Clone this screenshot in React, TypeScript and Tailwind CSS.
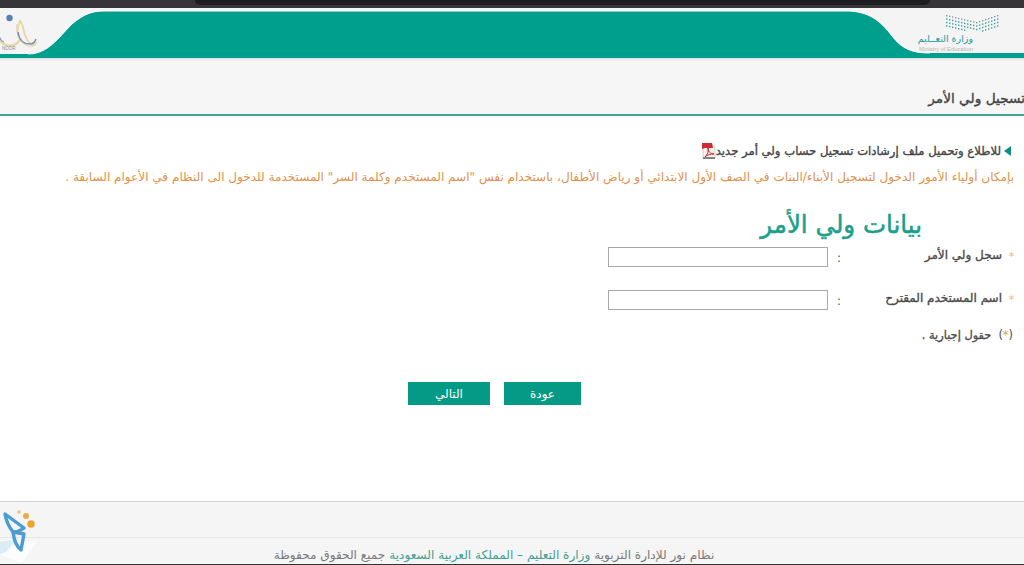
const arabic = 'font-["DejaVu_Sans",sans-serif]';

const NoorLogo = () => (
  <svg className="absolute left-0 top-[2px] h-[46px] w-[42px]" viewBox="0 0 42 46" fill="none">
    <circle cx="9.5" cy="8" r="3.2" fill="#5b7fb5" />
    <path d="M-3 18c0 9 3 15 9 17 5 2 11 0 14-5" stroke="#e6d6a4" strokeWidth="2.4" />
    <path d="M20 30c-3-6-3-13 0-19 3 2 3 8 5 14 2 6 6 10 10 10" stroke="#e6d6a4" strokeWidth="1.8" />
    <path d="M17 14c-1 8 2 19 11 22 4 1 8-1 9-4" stroke="#e6d6a4" strokeWidth="1.2" />
    <path d="M18 22c1 8 6 12 12 12 3 0 5-2 6-5" stroke="#7a8fb5" strokeWidth="1.5" />
    <path d="M-2 22c1 6 3 9 6 10" stroke="#8a9dc0" strokeWidth="1.3" />
    <text x="2" y="40" direction="ltr" fontSize="4.5" fill="#7d8aa5" fontFamily="Liberation Sans">
      NOOR
    </text>
  </svg>
);

const MinistryMark = () => {
  const dots: [number, number, string][] = [];
  for (let i = 0; i < 18; i++) {
    const dip = i < 10 ? i * 0.7 : (17 - i) * 1;
    const rows = i > 6 && i < 12 ? 3 : 4;
    for (let r = 0; r < rows; r++) {
      dots.push([i * 3 + 1, dip + r * 3.4 + 1, r === 0 ? '#7f9ba3' : '#3b9ea5']);
    }
  }
  return (
    <svg className="h-[20px] w-[55px]" viewBox="0 0 55 20">
      {dots.map(([x, y, fill], i) => (
        <rect key={i} x={x} y={y} width="1.4" height="1.4" fill={fill} />
      ))}
    </svg>
  );
};

const PdfIcon = () => (
  <svg className="-mr-[3px] h-[16px] w-[14px] shrink-0" viewBox="0 0 14 16">
    <path d="M1 .5h8l4 4v11H1z" fill="#f4f0ee" stroke="#b5b5b5" strokeWidth=".6" />
    <path d="M0 0h10l1 5H3L0 6z" fill="#cf2a30" />
    <path d="M3 14c3-3 4-7 3-9-1 3 3 6 6 6-3-.5-7 1-9 3z" fill="none" stroke="#c8242b" strokeWidth="1" />
    <rect x="1" y="14.4" width="12" height="1.2" fill="#4a4a4a" />
  </svg>
);

const BrandMark = () => (
  <svg className="absolute left-0 top-0 h-[62px] w-[44px]" viewBox="0 0 44 62" fill="none">
    <path d="M-2 46 38 38 22 61 8 56-2 52z" fill="#fcfcfc" />
    <path d="M-2 40 16 38 6 50-2 53z" fill="#dcecf6" />
    <path d="M5 12 24 26c-4 3-8 4-11 4C9 25 6 18 5 12z" stroke="#4b9cd3" strokeWidth="3.4" strokeLinejoin="round" />
    <path d="M13 30 24 32 21 48C17 45 14 38 13 30z" stroke="#4b9cd3" strokeWidth="3.4" strokeLinejoin="round" />
    <circle cx="19" cy="10" r="1.8" fill="#e7c58a" />
    <circle cx="26" cy="14" r="3" fill="#e8ac44" />
    <circle cx="31" cy="22" r="3.8" fill="#eaa52c" />
  </svg>
);

const Field = ({ label }: { label: string }) => (
  <div className="flex h-[20px] items-start">
    <span className="w-[11px] pt-[1px] text-center text-[11px] leading-[18px] text-[#eab95f]">*</span>
    <label className="w-[165px] pr-[4px] text-[12px] leading-[16px] text-[#4a4a4a] [-webkit-text-stroke:0.35px_#4a4a4a]">
      {label}
    </label>
    <span className="w-[10px] pt-[3px] text-[12px] leading-[16px] text-[#555]">:</span>
    <input type="text" className="mr-[3px] h-[20px] w-[220px] border border-[#a9a9a9] bg-white" />
  </div>
);

export default function App() {
  return (
    <div dir="rtl" className={`flex h-[565px] w-[1024px] flex-col overflow-hidden bg-white ${arabic}`}>
      <div className="h-[8px] shrink-0 bg-[#37353a]">
        <div className="mx-auto h-[5px] w-[735px] -translate-x-[-50px] rounded-b-[6px] bg-[#1d1c20]" />
      </div>

      <header className="relative h-[50px] shrink-0 bg-[#f4f4f4]">
        <svg className="absolute inset-0 h-full w-full" viewBox="0 0 1024 50" preserveAspectRatio="none">
          <path
            d="M0 46H28C48 46 58 30 72 16 84 6 92 3 104 3H846C868 3 880 12 892 28 902 41 912 45 930 45H1024V50H0Z"
            fill="#009e8c"
          />
          <path d="M28 46C48 46 58 30 72 16 84 6 92 3 104 3H846C868 3 880 12 892 28 902 41 912 45 930 45" fill="none" stroke="#fff" strokeWidth="1" />
        </svg>
        <NoorLogo />
        <div className="absolute right-[51px] top-[26px] w-[54px] text-center">
          <span className="block text-[9.5px] leading-[10px] whitespace-nowrap text-[#1e9aa0]">وزارة التعــليم</span>
          <span className={'mt-[2px] block whitespace-nowrap font-["Liberation_Sans",sans-serif] text-[5.8px] leading-[7px] text-[#b4b4b4]'}>
            Ministry of Education
          </span>
        </div>
        <div className="absolute right-[24px] top-[6px]">
          <MinistryMark />
        </div>
      </header>

      <div className="flex h-[58px] shrink-0 items-end border-b-2 border-[#3fa596] bg-[#f6f6f6] pb-[7px] shadow-[inset_0_3px_3px_-2px_#d8d8d8]">
        <h1 className="-mr-[1px] text-[13.7px] leading-[18px] text-[#444] [-webkit-text-stroke:0.35px_#444]">تسجيل ولي الأمر</h1>
      </div>

      <main className="flex flex-1 flex-col">
        <div className="box-content flex h-[20px] items-center gap-[3px] pr-[13px] pt-[25px]">
          <span className="h-0 w-0 border-y-[5px] border-r-[7px] border-y-transparent border-r-[#0c8f7f]" />
          <span className="text-[11.65px] leading-[16px] text-[#444] [-webkit-text-stroke:0.35px_#444]">
            للاطلاع وتحميل ملف إرشادات تسجيل حساب ولي أمر جديد
          </span>
          <PdfIcon />
        </div>
        <p className="mt-[8px] pr-[10px] text-[12.05px] leading-[16px] whitespace-nowrap text-[#e0914d]">
          بإمكان أولياء الأمور الدخول لتسجيل الأبناء/البنات في الصف الأول الابتدائي أو رياض الأطفال، باستخدام نفس "اسم المستخدم وكلمة السر" المستخدمة للدخول الى النظام في الأعوام السابقة .
        </p>

        <h2 className="mt-[24px] pr-[102px] text-[24.5px] leading-[32px] text-[#1b9f8a] [-webkit-text-stroke:0.5px_#1b9f8a]">بيانات ولي الأمر</h2>

        <div className="mt-[6px] flex flex-col gap-[23px] pr-[7px]">
          <Field label="سجل ولي الأمر" />
          <Field label="اسم المستخدم المقترح" />
        </div>

        <p className="mt-[17px] pr-[11px] text-[11.4px] leading-[16px] text-[#4a4a4a] [-webkit-text-stroke:0.3px_#4a4a4a]">
          <span className="[-webkit-text-stroke:0]">
            (<span className="text-[#d9a24a]">*</span>)
          </span>
          <span className="mr-[7px]">حقول إجبارية .</span>
        </p>

        <div className="mt-[39px] flex gap-[14px] pr-[443px]">
          <button type="button" className="h-[23px] w-[77px] bg-[#059a85] text-[12px] text-white">
            عودة
          </button>
          <button type="button" className="h-[23px] w-[82px] bg-[#059a85] text-[12px] text-white">
            التالي
          </button>
        </div>
      </main>

      <footer className="relative h-[63px] shrink-0 border-t border-[#d3d3d3] bg-[#f5f5f5]">
        <div className="mt-[35px] flex h-[26px] justify-center border-t border-[#e6e6e6] pr-[36px] pt-[9px]">
          <p className="text-[12.1px] leading-[16px] whitespace-nowrap text-[#7a7a7a]">
            نظام نور للإدارة التربوية <span className="text-[#3e9f92]">وزارة التعليم – المملكة العربية السعودية</span> جميع الحقوق محفوظة
          </p>
        </div>
        <BrandMark />
      </footer>
      <div className="h-px shrink-0 bg-[#333]" />
    </div>
  );
}
